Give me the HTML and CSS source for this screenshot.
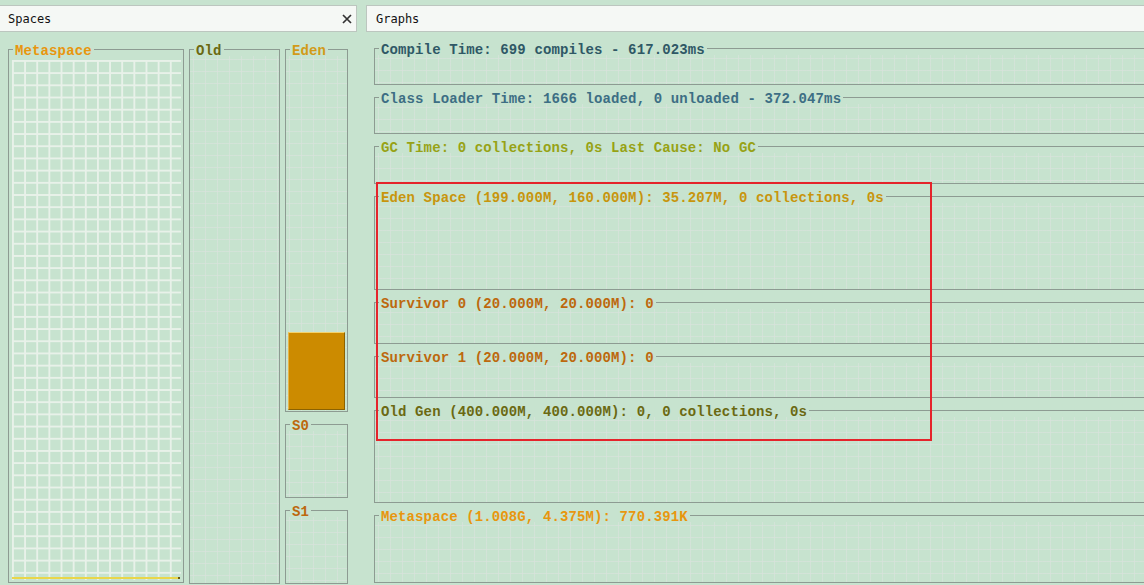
FILE: index.html
```html
<!DOCTYPE html>
<html>
<head>
<meta charset="utf-8">
<link rel="stylesheet" href="styles.css">
</head>
<body>
<div class="app">
  <section class="pane pane-spaces">
    <div class="tab tab-spaces">
      <span class="tab-label">Spaces</span>
      <svg class="close" width="10" height="10" viewBox="0 0 10 10"><path d="M1 1L9 9M9 1L1 9" stroke="#333" stroke-width="1.7" fill="none"/></svg>
    </div>
    <div class="spaces">
      <div class="tb tb-meta c-meta">
        <div class="tb-head"><span class="tb-title">Metaspace</span></div>
        <div class="tb-body body-meta"><div class="mgrid"><div class="mbar"></div></div></div>
      </div>
      <div class="tb tb-old c-old">
        <div class="tb-head"><span class="tb-title">Old</span></div>
        <div class="tb-body grid"></div>
      </div>
      <div class="col">
        <div class="tb tb-eden c-eden">
          <div class="tb-head"><span class="tb-title">Eden</span></div>
          <div class="tb-body grid body-fill"><div class="fill"></div></div>
        </div>
        <div class="tb tb-s c-surv">
          <div class="tb-head"><span class="tb-title">S0</span></div>
          <div class="tb-body grid"></div>
        </div>
        <div class="tb tb-s c-surv">
          <div class="tb-head"><span class="tb-title">S1</span></div>
          <div class="tb-body grid"></div>
        </div>
      </div>
    </div>
  </section>
  <section class="pane pane-graphs">
    <div class="tab tab-graphs"><span class="tab-label">Graphs</span></div>
    <div class="graphs">
      <div class="tb g-compile c-compile">
        <div class="tb-head"><span class="tb-title">Compile Time: 699 compiles - 617.023ms</span></div>
        <div class="tb-body grid"></div>
      </div>
      <div class="tb g-class c-class">
        <div class="tb-head"><span class="tb-title">Class Loader Time: 1666 loaded, 0 unloaded - 372.047ms</span></div>
        <div class="tb-body grid"></div>
      </div>
      <div class="tb g-gc c-gc">
        <div class="tb-head"><span class="tb-title">GC Time: 0 collections, 0s Last Cause: No GC</span></div>
        <div class="tb-body grid"></div>
      </div>
      <div class="tb g-eden c-eden2">
        <div class="tb-head"><span class="tb-title">Eden Space (199.000M, 160.000M): 35.207M, 0 collections, 0s</span></div>
        <div class="tb-body grid"></div>
      </div>
      <div class="tb g-surv c-surv">
        <div class="tb-head"><span class="tb-title">Survivor 0 (20.000M, 20.000M): 0</span></div>
        <div class="tb-body grid"></div>
      </div>
      <div class="tb g-surv c-surv">
        <div class="tb-head"><span class="tb-title">Survivor 1 (20.000M, 20.000M): 0</span></div>
        <div class="tb-body grid"></div>
      </div>
      <div class="tb g-old c-old">
        <div class="tb-head"><span class="tb-title">Old Gen (400.000M, 400.000M): 0, 0 collections, 0s</span></div>
        <div class="tb-body grid"></div>
      </div>
      <div class="tb g-meta c-meta">
        <div class="tb-head"><span class="tb-title">Metaspace (1.008G, 4.375M): 770.391K</span></div>
        <div class="tb-body grid"></div>
      </div>
    </div>
  </section>
</div>
<div class="annot"></div>
</body>
</html>
```

FILE: styles.css
```css
:root {
  --bg: #c7e3cf;
  --line: #8d9b92;
  --gridw: #e8f1e9;
  --gridf: rgba(226, 226, 226, 0.45);
}

html, body {
  margin: 0;
  padding: 0;
  width: 1144px;
  height: 585px;
  overflow: hidden;
  background: var(--bg);
}

.app {
  display: flex;
  padding-top: 5px;
  gap: 9px;
}

.pane {
  display: flex;
  flex-direction: column;
  flex: none;
}

.pane-spaces { width: 357px; }
.pane-graphs { width: 820px; }

.tab {
  box-sizing: border-box;
  height: 27px;
  border: 1px solid #bcc6bf;
  background: #f5f8f5;
  display: flex;
  align-items: center;
  font-family: "DejaVu Sans Mono", "Liberation Mono", monospace;
  font-size: 12px;
  color: #111;
}

.tab-spaces { border-left: 0; padding-left: 8px; }
.tab-graphs { padding-left: 9px; }

.close {
  margin-left: auto;
  margin-right: 4px;
}

/* titled border */
.tb {
  display: flex;
  flex-direction: column;
  box-sizing: border-box;
  flex: none;
}

.tb-head {
  display: flex;
  align-items: flex-start;
  height: 14px;
  flex: none;
}

.tb-head::before {
  content: "";
  width: 4px;
  height: 7px;
  margin-top: 7px;
  border-top: 1px solid var(--line);
  border-left: 1px solid var(--line);
}

.tb-head::after {
  content: "";
  flex: 1;
  height: 7px;
  min-width: 3px;
  margin-top: 7px;
  border-top: 1px solid var(--line);
  border-right: 1px solid var(--line);
}

.tb-title {
  padding: 2px 2px 0 2px;
  line-height: 14px;
  white-space: nowrap;
  font-family: "Liberation Mono", "DejaVu Sans Mono", monospace;
  font-weight: bold;
  font-size: 14px;
  letter-spacing: 0.12px;
}

.tb-body {
  flex: 1;
  border: 1px solid var(--line);
  border-top: 0;
}

.grid {
  background-image:
    linear-gradient(90deg, var(--gridf) 1px, transparent 1px),
    linear-gradient(180deg, var(--gridf) 1px, transparent 1px);
  background-size: 12px 12px;
  background-position: 3px 3px;
}

/* colours */
.c-meta { color: #e8960e; }
.c-old { color: #6b6912; }
.c-eden { color: #d29a18; }
.c-eden2 { color: #c8950d; }
.c-surv { color: #bd680d; }
.c-compile { color: #2f5866; }
.c-class { color: #3d6e84; }
.c-gc { color: #97a215; }

/* spaces */
.spaces {
  display: flex;
  gap: 5px;
  padding: 10px 0 0 8px;
}

.tb-meta { width: 176px; height: 541px; }
.tb-old { width: 91px; height: 542px; }

.col {
  display: flex;
  flex-direction: column;
  gap: 5px;
  width: 63px;
}

.tb-eden { height: 370px; }
.tb-s { height: 81px; }

.body-meta {
  display: flex;
  padding: 4px 2px 2px 3px;
}

.mgrid {
  flex: 1;
  display: flex;
  flex-direction: column;
  justify-content: flex-end;
  background-image:
    linear-gradient(90deg, var(--gridw) 2px, transparent 2px),
    linear-gradient(180deg, var(--gridw) 2px, transparent 2px);
  background-size: 12.15px 12.2px;
}

.mbar {
  height: 2px;
  margin: 0 1px 1px 0;
  background: #e9d64a;
  border-right: 2px solid #6b5a10;
}

.body-fill {
  display: flex;
  flex-direction: column;
  justify-content: flex-end;
  padding: 0 2px 1px 2px;
}

.fill {
  box-sizing: border-box;
  height: 78px;
  background: #cc8b00;
  border-top: 1px solid #f3d26c;
  border-left: 1px solid #e6b448;
  border-right: 1px solid #8c6200;
  border-bottom: 1px solid #8c6200;
}

/* graphs */
.graphs {
  display: flex;
  flex-direction: column;
  gap: 5px;
  padding: 9px 0 0 8px;
}

.g-compile, .g-class { height: 44px; }
.g-gc { height: 45px; }
.g-eden { height: 101px; }
.g-surv { height: 49px; }
.g-old { height: 100px; }
.g-meta { height: 75px; }

.annot {
  position: absolute;
  left: 376px;
  top: 182px;
  width: 556px;
  height: 259px;
  box-sizing: border-box;
  border: 2px solid #e5242b;
}
```
